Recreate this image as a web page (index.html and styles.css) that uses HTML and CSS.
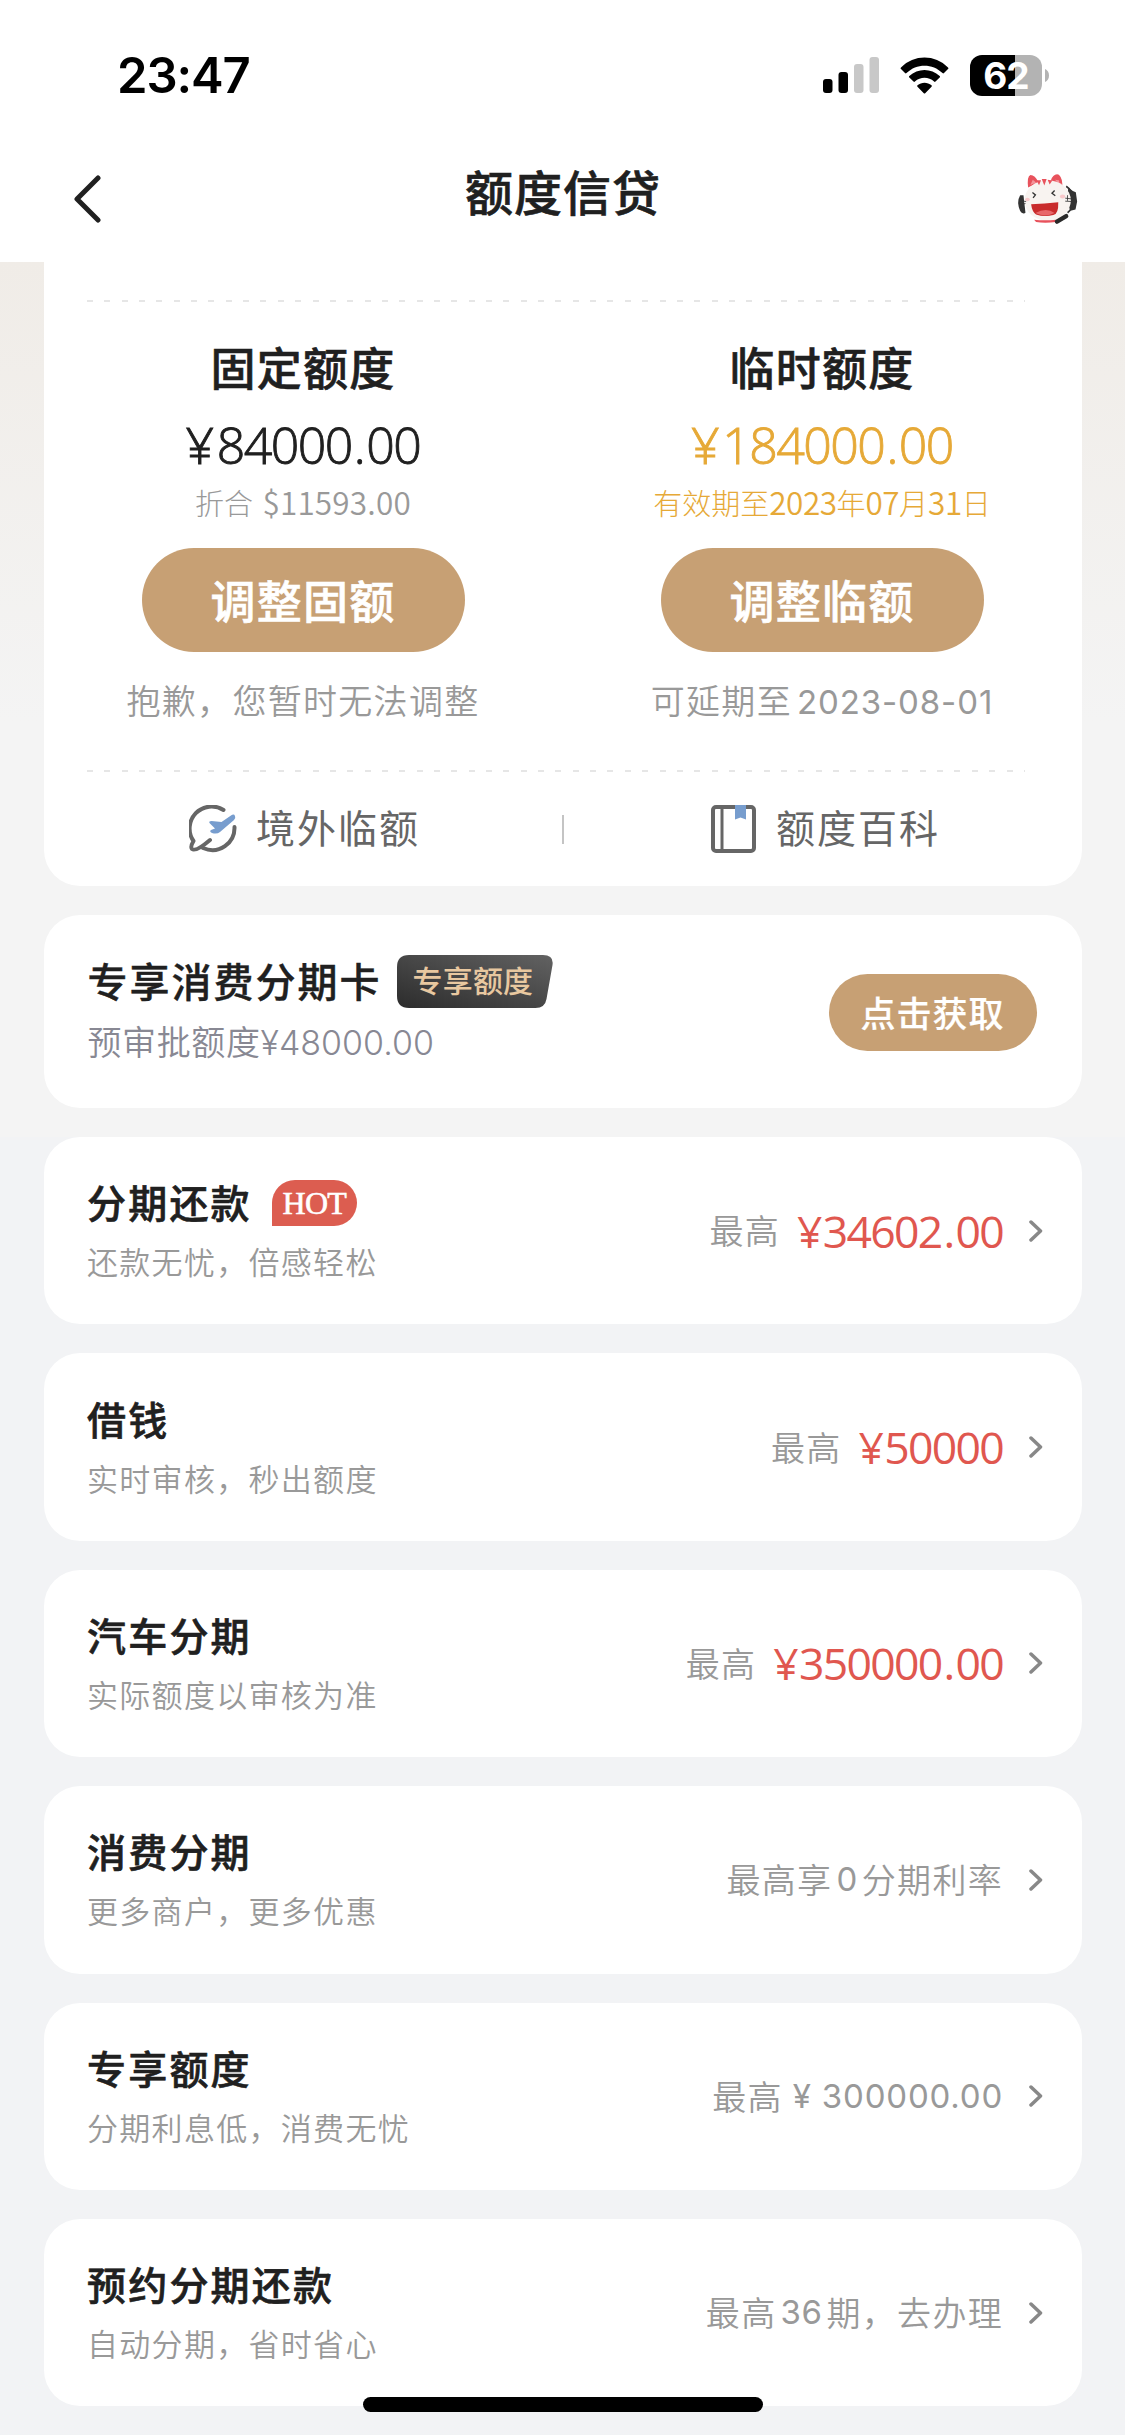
FILE: index.html
```html
<!DOCTYPE html>
<html lang="zh-CN">
<head>
<meta charset="utf-8">
<title>额度信贷</title>
<link rel="stylesheet" href="styles.css">
</head>
<body>
<header class="header">
  <div class="status">
    <div class="time">23:47</div>
    <div class="status-icons">
      <svg class="signal" viewBox="0 0 56 36"><rect x="0" y="22" width="9.5" height="14" rx="3"/><rect x="15.5" y="15" width="9.5" height="21" rx="3"/><g fill="#c8c8c8"><rect x="31" y="7" width="9.5" height="29" rx="3"/><rect x="46.500" y="0" width="9.500" height="36" rx="3"/></g></svg>
      <svg class="wifi" viewBox="0 0 49 37"><path d="M1 10.500C14-2.800 35-2.800 48 10.500a1 1 0 0 1 0 1.500l-4 4a1 1 0 0 1-1.500 0C32.500 6.200 16.500 6.200 6.500 16a1 1 0 0 1-1.500 0l-4-4a1 1 0 0 1 0-1.500z"/><path d="M9.300 19c8.500-8 21.900-8 30.400 0a1 1 0 0 1 0 1.500l-4.200 4.100a1 1 0 0 1-1.400 0c-5.500-5-13.700-5-19.200 0a1 1 0 0 1-1.400 0l-4.200-4.100a1 1 0 0 1 0-1.500z"/><path d="M17.500 28.300c4-3.500 10-3.500 14 0a1 1 0 0 1 0 1.500l-6.300 6.400a1 1 0 0 1-1.400 0l-6.300-6.400a1 1 0 0 1 0-1.500z"/></svg>
      <div class="battery">62</div>
      <svg class="nub" viewBox="0 0 4 13"><path d="M0 0c2.500 1 4 3.500 4 6.500S2.500 12 0 13z"/></svg>
    </div>
  </div>
  <nav class="nav">
    <svg class="back" viewBox="0 0 28 48"><path d="M25 3 4 24l21 21"/></svg>
    <h1 class="page-title">额度信贷</h1>
    <svg class="cat" viewBox="48 48 186 160">
      <path d="M60 115q-12 20 0 48 4 8 12 7l4-2-6-53z" fill="#333"/>
      <path d="M199 88q20 14 22 38 0 28-18 42" fill="none" stroke="#333" stroke-width="5"/>
      <path d="M205 92l14 10 9 4 4 28-5 24-15 4-10-22z" fill="#333"/>
      <path d="M84 92q-4-34 7-38 14 0 24 22zM152 72q8-24 25-19 14 14 9 41z" fill="#e8525c"/>
      <path d="M91 84l7-16 10 9zM165 68l12 2 3 14z" fill="#f3949a"/>
      <ellipse cx="143" cy="131" rx="70" ry="61" fill="#f8f3f0"/>
      <path d="M109 70l8 15 6-15zM125 66l8 20 7-20zM143 68l6 15 8-12z" fill="#e8525c"/>
      <path d="M93 142q40-2 82-6 1 36-15 39-28 6-52-2-12-8-15-31z" fill="#c92b2c"/>
      <path d="M106 169q33-18 58 0-28 14-58 0z" fill="#e8676a"/>
      <path d="M97 107l9 7-7 9M164 101l-8 8 10 8" fill="none" stroke="#333" stroke-width="4"/>
      <ellipse cx="82" cy="128" rx="7" ry="5" fill="#f9c9cb"/><ellipse cx="188" cy="119" rx="8" ry="6" fill="#f9c9cb"/>
      <path d="M60 132l18 2M64 143l12-3M196 124l18 2M196 133l18 1M203 115v17" fill="none" stroke="#333" stroke-width="2.500"/>
      <path d="M102 189q34 4 66 0v7q-34 5-60 0z" fill="#e8525c"/>
      <path d="M171 195l28-17" stroke="#292929" stroke-width="13" stroke-linecap="round"/>
    </svg>
  </nav>
</header>

<main class="content">
  <section class="card quota">
    <div class="dash"></div>
    <div class="columns">
      <div class="column">
        <h2 class="quota-name">固定额度</h2>
        <div class="amount"><i class="yen">¥</i>84000<i>.</i>00</div>
        <div class="detail">折合 <b class="usd">$11593.00</b></div>
        <button class="btn btn-large">调整固额</button>
        <div class="note">抱歉，您暂时无法调整</div>
      </div>
      <div class="column">
        <h2 class="quota-name">临时额度</h2>
        <div class="amount gold"><i class="yen">¥</i>184000<i>.</i>00</div>
        <div class="detail gold">有效期至<b>2023</b>年<b>07</b>月<b>31</b>日</div>
        <button class="btn btn-large">调整临额</button>
        <div class="note">可延期至<span class="date">2023-08-01</span></div>
      </div>
    </div>
    <div class="dash"></div>
    <div class="links">
      <a class="link">
        <svg class="link-icon" viewBox="0 0 48 48"><g fill="none" stroke="#666" stroke-width="4" stroke-linecap="round" stroke-linejoin="round"><path d="M34.500 5A22 22 0 0 0 4.500 36Q1 42 3 44q4 3 18-9"/><path d="M45.500 22C46 38 30 50 14 43"/></g><path d="M42 10.500q3-2 4 .5t-1 4L31 27q-3 2.500-8 1-3-1.500-1-3l4-1.500-5.500-5.500q-1-2 2-2l10 1z" fill="#779dce"/></svg>
        <span class="link-label">境外临额</span>
      </a>
      <span class="split"></span>
      <a class="link">
        <svg class="link-icon" viewBox="0 0 48 48"><rect x="4" y="2" width="41" height="44" rx="3" fill="none" stroke="#666" stroke-width="4"/><path d="M13 2v44" stroke="#666" stroke-width="3"/><path d="M26 0h11v14.500l-5.500-2-5.500 2z" fill="#779dce"/></svg>
        <span class="link-label">额度百科</span>
      </a>
    </div>
  </section>

  <section class="card promo">
    <div class="promo-text">
      <div class="promo-head"><h3 class="promo-title">专享消费分期卡</h3>
        <div class="ribbon"><svg class="ribbon-shape" viewBox="0 0 156 53"><defs><linearGradient id="dark" x1="0" y1="1" x2="1" y2="0"><stop offset="0" stop-color="#2c2c2c"/><stop offset="1" stop-color="#626262"/></linearGradient></defs><path d="M12 0h134q11 0 9.500 10l-6 34q-1.500 9-11 9H12Q0 53 0 41V12Q0 0 12 0z" fill="url(#dark)"/></svg><span class="ribbon-label">专享额度</span></div>
      </div>
      <div class="promo-sub">预审批额度<span class="digits">¥48000.00</span></div>
    </div>
    <button class="btn btn-small">点击获取</button>
  </section>

  <section class="card row">
    <div class="info"><h3 class="name">分期还款<span class="hot">HOT</span></h3><p class="desc">还款无忧，倍感轻松</p></div>
    <div class="value">最高<strong><i class="yen">¥</i>34602<i>.</i>00</strong></div>
    <svg class="arrow" viewBox="0 0 14 22"><path d="m2 2 9.500 9L2 20"/></svg>
  </section>
  <section class="card row">
    <div class="info"><h3 class="name">借钱</h3><p class="desc">实时审核，秒出额度</p></div>
    <div class="value">最高<strong><i class="yen">¥</i>50000</strong></div>
    <svg class="arrow" viewBox="0 0 14 22"><path d="m2 2 9.500 9L2 20"/></svg>
  </section>
  <section class="card row">
    <div class="info"><h3 class="name">汽车分期</h3><p class="desc">实际额度以审核为准</p></div>
    <div class="value">最高<strong><i class="yen">¥</i>350000<i>.</i>00</strong></div>
    <svg class="arrow" viewBox="0 0 14 22"><path d="m2 2 9.500 9L2 20"/></svg>
  </section>
  <section class="card row">
    <div class="info"><h3 class="name">消费分期</h3><p class="desc">更多商户，更多优惠</p></div>
    <div class="value">最高享<span class="num">0</span>分期利率</div>
    <svg class="arrow" viewBox="0 0 14 22"><path d="m2 2 9.500 9L2 20"/></svg>
  </section>
  <section class="card row">
    <div class="info"><h3 class="name">专享额度</h3><p class="desc">分期利息低，消费无忧</p></div>
    <div class="value">最高<span class="num end">¥ 300000.00</span></div>
    <svg class="arrow" viewBox="0 0 14 22"><path d="m2 2 9.500 9L2 20"/></svg>
  </section>
  <section class="card row">
    <div class="info"><h3 class="name">预约分期还款</h3><p class="desc">自动分期，省时省心</p></div>
    <div class="value">最高<span class="num">36</span>期，去办理</div>
    <svg class="arrow" viewBox="0 0 14 22"><path d="m2 2 9.500 9L2 20"/></svg>
  </section>
</main>
<div class="home-bar"></div>
</body>
</html>
```
FILE: styles.css
```css
* { box-sizing: border-box; margin: 0; padding: 0; }
body {
  width: 1125px;
  height: 2435px;
  overflow: hidden;
  position: relative;
  background: #f2f3f5;
  color: #202020;
  font-family: "Noto Sans CJK SC", sans-serif;
}
svg { display: block; flex: none; }
i, b { font-style: normal; font-weight: inherit; }

.header { height: 262px; background: #fff; }
.status {
  height: 150px;
  padding: 0 76px 0 117px;
  display: flex;
  align-items: center;
  justify-content: space-between;
}
.time { font: 600 49px/60px Inter, sans-serif; color: #000; letter-spacing: -1.1px; padding-top: 1px; }
.status-icons { display: flex; align-items: center; }
.signal { width: 56px; height: 36px; }
.wifi { width: 49px; height: 37px; margin-left: 21px; }
.battery {
  width: 72px;
  height: 41px;
  margin-left: 21px;
  border-radius: 12px;
  background: linear-gradient(90deg, #000 45.5px, #b3b3b3 45.5px);
  color: #fff;
  text-align: center;
  font: 700 37px/42px Inter, sans-serif;
  letter-spacing: -1px;
}
.nub { width: 4px; height: 13px; margin-left: 3px; fill: #b3b3b3; }
.nav {
  height: 98px;
  padding: 0 47px 0 73px;
  display: flex;
  align-items: center;
  justify-content: space-between;
}
.back { width: 28px; height: 48px; fill: none; stroke: #202020; stroke-width: 5; stroke-linecap: round; stroke-linejoin: round; margin-right: 9px; }
.page-title { font-size: 48px; font-weight: 500; line-height: 60px; letter-spacing: 1px; padding-bottom: 18px; -webkit-text-stroke: .6px; }
.cat { width: 62px; height: 53px; }

.content {
  padding: 0 43.5px;
  display: flex;
  flex-direction: column;
  gap: 29px;
  background: linear-gradient(#f0ece7, #f4f4f4 460px, #f4f4f4 875px, #f2f3f5 875px);
}
.card { background: #fff; border-radius: 36px; }
.quota { height: 624px; border-radius: 0 0 36px 36px; padding-top: 38px; }
.dash {
  height: 2px;
  margin: 0 57px 0 43px;
  background: repeating-linear-gradient(90deg, #e6e6e6 0 6px, transparent 6px 17.35px);
}
.columns { display: flex; height: 468px; }
.column { flex: 1; display: flex; flex-direction: column; align-items: center; padding-top: 35px; }
.quota-name { font-size: 45px; font-weight: 500; line-height: 60px; letter-spacing: 1.3px; -webkit-text-stroke: .6px; }
.amount { font: 300 50px/60px "Open Sans", sans-serif; letter-spacing: -1.5px; margin-top: 18px; -webkit-text-stroke: .9px; }
.amount i { margin: 0 2px; }
.amount .yen { margin: 0 4px 0 0; }
.gold { color: #e6a937; }
.detail { height: 36px; margin-top: 8px; font-size: 29px; line-height: 36px; font-weight: 300; color: #999; white-space: pre; }
.detail b { font-size: 31.5px; font-weight: 350; letter-spacing: -.5px; }
.detail.gold { color: #e6a937; }
.detail .usd { margin-left: 3px; letter-spacing: .2px; }
.btn { border: 0; background: #c7a074; color: #fff; font-family: inherit; font-weight: 500; }
.btn-large { width: 323px; height: 104px; margin-top: 29px; border-radius: 52px; font-size: 45px; letter-spacing: 1.3px; line-height: 60px; -webkit-text-stroke: .6px; }
.note { margin-top: 26px; font-size: 34px; line-height: 44px; letter-spacing: 1.3px; color: #999; font-weight: 350; white-space: nowrap; }
.date, .num { font-family: Inter, sans-serif; font-weight: 400; font-size: 33px; letter-spacing: .6px; }
.date { margin-left: 5px; letter-spacing: .9px; }
.links { height: 114px; display: flex; align-items: center; }
.link { flex: 1; display: flex; align-items: center; justify-content: center; gap: 19px; padding-left: 4px; font-size: 39px; line-height: 56px; letter-spacing: 2px; color: #666; }
.link-icon { width: 48px; height: 48px; }
.link-label { padding-bottom: 6px; }
.split { width: 2px; height: 29px; background: #c4c4c4; }

.promo { height: 193px; padding: 0 44px; display: flex; align-items: center; justify-content: space-between; }
.promo-text { padding-bottom: 4px; }
.promo-head { display: flex; align-items: center; gap: 15px; }
.promo-title { font-size: 40px; font-weight: 500; line-height: 53px; letter-spacing: 2px; padding-bottom: 2px; -webkit-text-stroke: .4px; }
.ribbon { display: grid; width: 156px; height: 53px; }
.ribbon-shape, .ribbon-label { grid-area: 1 / 1; }
.ribbon-shape { width: 156px; height: 53px; }
.ribbon-label { padding-left: 16px; font-size: 30px; font-weight: 500; line-height: 49px; letter-spacing: .2px; color: #e8c8a0; }
.promo-sub { font-size: 34px; line-height: 44px; margin-top: 10px; letter-spacing: .6px; color: #888893; font-weight: 350; }
.digits { font-family: Inter, sans-serif; letter-spacing: 0; }
.btn-small { width: 208px; height: 77px; margin-right: 1px; margin-top: 2px; border-radius: 39px; font-size: 35px; letter-spacing: 1px; -webkit-text-stroke: .2px; padding-bottom: 3px; }

.row { height: 187.4px; padding: 0 38.5px 0 43.5px; display: flex; align-items: center; }
.info { flex: 1; padding-bottom: 3px; }
.name { display: flex; align-items: center; font-size: 39px; font-weight: 500; line-height: 54px; letter-spacing: 2.2px; -webkit-text-stroke: .6px; }
.desc { margin-top: 10px; font-size: 31px; line-height: 46px; letter-spacing: 1.3px; color: #999; font-weight: 350; }
.hot {
  width: 85px;
  height: 46px;
  margin: 4px 0 0 20px;
  border-radius: 23px 23px 23px 0;
  background: #dc5d50;
  color: #fff;
  text-align: center;
  font: 400 32px/46px "Liberation Serif", serif;
  letter-spacing: -.7px;
}
.value { display: flex; align-items: center; font-size: 34px; line-height: 46px; letter-spacing: 1.3px; color: #999; font-weight: 350; padding-bottom: 1px; }
.value strong { margin-left: 17px; font: 400 44.5px/50px "Open Sans", sans-serif; letter-spacing: -1.7px; color: #e0574f; padding-top: 1px; }
.value i { margin: 0 2px; }
.value .yen { margin: 0 2px 0 0; }
.num { margin: 0 4px; }
.num.end { margin: 0 0 0 10px; letter-spacing: .8px; }
.arrow { width: 14px; height: 22px; margin-left: 26px; fill: none; stroke: #888; stroke-width: 3.5; stroke-linecap: round; stroke-linejoin: round; }

.home-bar { position: absolute; left: 363px; top: 2397px; width: 400px; height: 15px; border-radius: 8px; background: #000; }
```
